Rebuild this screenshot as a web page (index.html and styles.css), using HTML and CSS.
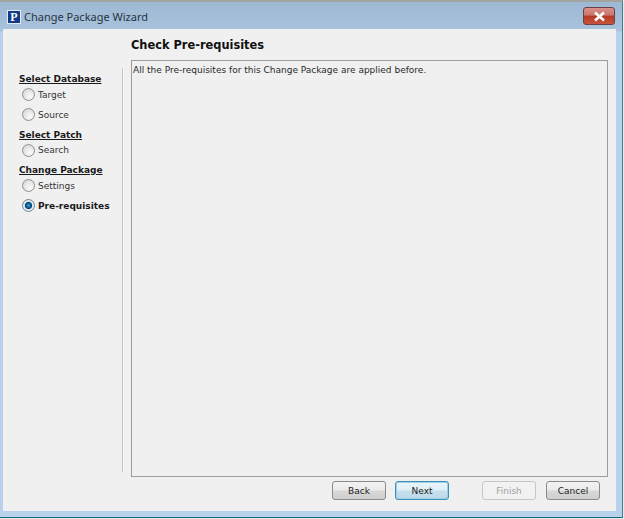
FILE: index.html
```html
<!DOCTYPE html>
<html lang="en">

<head>
    <meta charset="UTF-8">
    <meta name="viewport" content="width=device-width, initial-scale=1.0">
    <title>Change Package Wizard</title>
    <link rel="stylesheet" href="styles.css">
</head>

<body>
    <div class="window">
        <!-- Title bar -->
        <div class="titlebar">
            <div class="app-icon">P</div>
            <div class="title">Change Package Wizard</div>
            <div class="close-btn">
                <svg width="13" height="11" viewBox="0 0 13 11">
                    <path d="M2 1.5 L11 9.5 M11 1.5 L2 9.5" stroke="#fff" stroke-width="2.6" fill="none"/>
                </svg>
            </div>
        </div>

        <div class="client">
            <!-- Steps -->
            <div class="sidebar">
                <div class="step-head">Select Database</div>
                <div class="step"><span class="radio"></span>Target</div>
                <div class="step"><span class="radio"></span>Source</div>
                <div class="step-head">Select Patch</div>
                <div class="step"><span class="radio"></span>Search</div>
                <div class="step-head">Change Package</div>
                <div class="step"><span class="radio"></span>Settings</div>
                <div class="step current"><span class="radio checked"></span>Pre-requisites</div>
            </div>

            <!-- Main section -->
            <div class="main">
                <h1>Check Pre-requisites</h1>
                <div class="panel">All the Pre-requisites for this Change Package are applied before.</div>
                <div class="buttons">
                    <button class="btn">Back</button>
                    <button class="btn focused">Next</button>
                    <button class="btn disabled finish">Finish</button>
                    <button class="btn">Cancel</button>
                </div>
            </div>
        </div>
    </div>
</body>

</html>
```

FILE: styles.css
```css
html,
body {
    margin: 0;
    padding: 0;
}

body {
    width: 624px;
    height: 519px;
    overflow: hidden;
    background-color: #e8eaec;
    font-family: "DejaVu Sans", sans-serif;
    font-size: 9px;
    color: #222;
}

.window {
    box-sizing: border-box;
    width: 623px;
    height: 518px;
    padding: 0 6px 6px 3px;
    background: linear-gradient(to bottom, #9db8d3 0, #a9c3dc 29px, #b9d2ec 30px, #b9d2ec 100%);
    border-top: 2px solid #a3a3a0;
    border-right: 1px solid #3f7f90;
    border-bottom: 1px solid #0c6a78;
    display: flex;
    flex-direction: column;
}

.titlebar {
    height: 27px;
    flex: none;
    display: flex;
    align-items: center;
    padding: 2px 0 0 4px;
    box-sizing: border-box;
}

.app-icon {
    width: 12px;
    height: 12px;
    background-color: #123a86;
    border: 1px solid #e4ebf4;
    margin-right: 3px;
    color: #fff;
    font-family: "Liberation Serif", serif;
    font-weight: bold;
    font-size: 12px;
    line-height: 12px;
    text-align: center;
}

.title {
    flex: 1;
    font-family: "Noto Sans", sans-serif;
    font-size: 11px;
    color: #27333f;
}

.close-btn {
    width: 30px;
    height: 16px;
    margin-right: 1px;
    margin-top: -1px;
    border: 1px solid #6b3f45;
    border-radius: 3px;
    background: linear-gradient(to bottom, #d9928a 0, #c9756a 45%, #b43a26 50%, #c8523c 100%);
    display: flex;
    align-items: center;
    justify-content: center;
}

.client {
    flex: 1;
    display: flex;
    background-color: #f0f0f0;
}

.sidebar {
    box-sizing: border-box;
    width: 120px;
    flex: none;
    margin-top: 39px;
    padding-top: 5px;
    height: 404px;
    border-right: 1px solid #c4c4c4;
    box-shadow: 1px 0 0 #fafafa;
}

.step-head {
    margin-left: 16px;
    height: 11.5px;
    line-height: 13.5px;
    font-weight: bold;
    text-decoration: underline;
    color: #1a1a1a;
}

.step + .step-head {
    margin-top: 4px;
}

.step {
    display: flex;
    align-items: center;
    height: 20px;
    margin-left: 19px;
    color: #333;
}

.current {
    font-weight: bold;
    color: #1a1a1a;
}

.radio {
    box-sizing: border-box;
    width: 13px;
    height: 13px;
    margin-right: 3px;
    border: 1px solid #8f8f8f;
    border-radius: 50%;
    background: radial-gradient(circle at 65% 70%, #fbfbfb 0, #e6e6e6 50%, #cfcfcf 100%);
}

.checked {
    border-color: #6f8793;
    background: radial-gradient(circle at 50% 50%, #3fb0e0 0, #0f6fb0 20%, #0b3f70 40%, #dfe6ea 52%, #eef1f3 100%);
}

.main {
    flex: 1;
    display: flex;
    flex-direction: column;
    margin-left: 8px;
    margin-right: 8px;
}

h1 {
    margin: 0;
    height: 31px;
    line-height: 33px;
    font-size: 11.4px;
    font-weight: bold;
    color: #111;
}

.panel {
    box-sizing: border-box;
    height: 417px;
    border: 1px solid #9c9c9c;
    padding: 3px 1px;
    line-height: 13px;
    color: #2a2a2a;
}

.buttons {
    display: flex;
    margin-top: 4px;
    padding-left: 201px;
    gap: 9px;
}

.btn {
    box-sizing: border-box;
    width: 54px;
    height: 19px;
    padding: 0;
    border: 1px solid #8a8a8a;
    border-radius: 3px;
    background: linear-gradient(to bottom, #f2f2f2 0, #ebebeb 48%, #d8d8d8 52%, #cfcfcf 100%);
    font-family: "DejaVu Sans", sans-serif;
    font-size: 9px;
    color: #222;
}

.focused {
    border-color: #3c8fb8;
    background: linear-gradient(to bottom, #eaf6fb 0, #dfeff7 48%, #c6dfec 52%, #bcd8e8 100%);
    box-shadow: inset 0 0 0 1px #9ed0e6;
}

.disabled {
    border-color: #c6c6c6;
    background: #f2f2f2;
    color: #a0a0a0;
}

.finish {
    margin-left: 24px;
}

.finish + .btn {
    margin-left: 1px;
}
```
